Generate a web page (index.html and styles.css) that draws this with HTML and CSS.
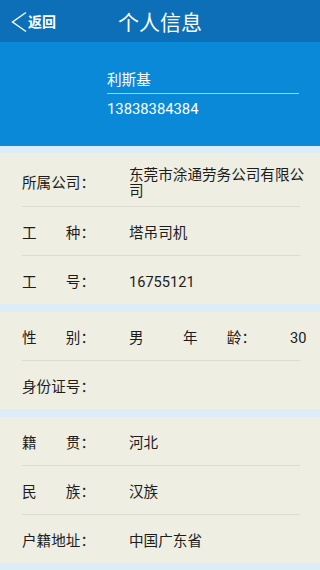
FILE: index.html
```html
<!DOCTYPE html>
<html lang="zh">
<head>
<meta charset="utf-8">
<link rel="stylesheet" href="styles.css">
</head>
<body>
<header class="topbar">
  <div class="back">
    <svg class="chev" width="18" height="22" viewBox="0 0 18 22"><path d="M16 1.5 L2.5 11 L16 20.5" fill="none" stroke="#fff" stroke-width="1.4"/></svg>
    <span class="back-text">返回</span>
  </div>
  <h1 class="title">个人信息</h1>
</header>
<section class="profile">
  <div class="profile-info">
    <div class="name">利斯基</div>
    <div class="phone">13838384384</div>
  </div>
</section>
<main class="groups">
  <div class="group">
    <div class="row row-tall">
      <span class="label">所属公司：</span>
      <span class="value">东莞市涂通劳务公司有限公司</span>
    </div>
    <div class="sep"></div>
    <div class="row">
      <span class="label">工　　种：</span>
      <span class="value">塔吊司机</span>
    </div>
    <div class="sep"></div>
    <div class="row">
      <span class="label">工　　号：</span>
      <span class="value">16755121</span>
    </div>
  </div>
  <div class="group">
    <div class="row">
      <span class="label">性　　别：</span>
      <span class="value short">男</span>
      <span class="label">年　　龄：</span>
      <span class="value right">30</span>
    </div>
    <div class="sep"></div>
    <div class="row">
      <span class="label">身份证号：</span>
      <span class="value"></span>
    </div>
  </div>
  <div class="group">
    <div class="row">
      <span class="label">籍　　贯：</span>
      <span class="value">河北</span>
    </div>
    <div class="sep"></div>
    <div class="row">
      <span class="label">民　　族：</span>
      <span class="value">汉族</span>
    </div>
    <div class="sep"></div>
    <div class="row">
      <span class="label">户籍地址：</span>
      <span class="value">中国广东省</span>
    </div>
  </div>
</main>
</body>
</html>
```

FILE: styles.css
```css
html, body {
  margin: 0;
  padding: 0;
}
body {
  width: 320px;
  height: 570px;
  overflow: hidden;
  background: #dcedf8;
  font-family: Roboto, "Noto Sans CJK SC", sans-serif;
  color: #1c1c1c;
}
.topbar {
  height: 42px;
  background: #0c6fb8;
  display: flex;
  align-items: center;
  position: relative;
}
.back {
  display: flex;
  align-items: center;
  padding-left: 10px;
  padding-top: 1px;
  color: #fff;
}
.chev {
  display: block;
}
.back-text {
  font-size: 14px;
  font-weight: bold;
  line-height: 16px;
  margin-left: 0;
}
.title {
  position: absolute;
  left: 0;
  right: 0;
  top: 0;
  height: 42px;
  margin: 0;
  text-align: center;
  font-size: 21px;
  font-weight: normal;
  line-height: 46px;
  color: #fff;
  pointer-events: none;
}
.profile {
  height: 104px;
  background: #0a89d8;
  padding-left: 107px;
  padding-right: 21px;
  box-sizing: border-box;
}
.profile-info {
  padding-top: 29px;
  color: #fff;
}
.name {
  font-size: 14.6px;
  line-height: 18px;
  padding-bottom: 4px;
  border-bottom: 1px solid #9fd2f4;
}
.phone {
  font-size: 14.8px;
  line-height: 18px;
  padding-top: 6px;
}
.groups {
  display: flex;
  flex-direction: column;
  gap: 8px;
  padding-top: 7px;
}
.group {
  background: #eeeee2;
}
.row {
  display: flex;
  align-items: center;
  height: 48px;
  box-sizing: border-box;
  padding: 3px 12px 0 22px;
  font-size: 14.6px;
  line-height: 16px;
}
.row-tall {
  height: 53px;
  padding-top: 6px;
}
.label {
  width: 107px;
  flex: none;
  white-space: nowrap;
}
.value {
  flex: 1;
  min-width: 0;
}
.value.short {
  flex: none;
  width: 54px;
}
.value.right {
  text-align: right;
  padding-right: 3px;
}
.sep {
  height: 1px;
  margin: 0 20px 0 22px;
  background: #dcdcd0;
}
```
